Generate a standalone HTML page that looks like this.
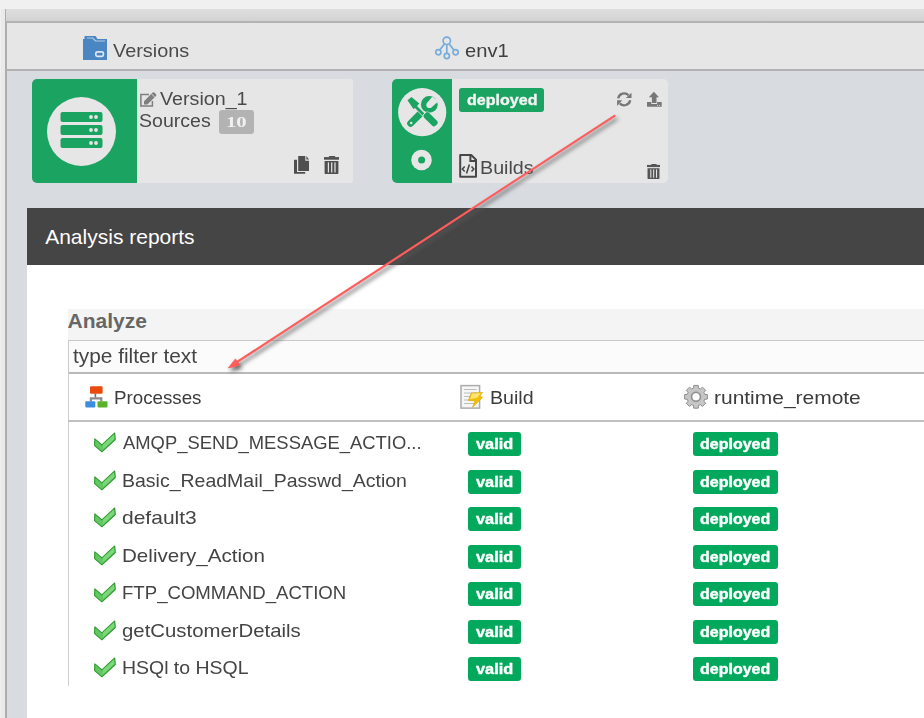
<!DOCTYPE html>
<html><head><meta charset="utf-8">
<style>
*{margin:0;padding:0;box-sizing:border-box}
html,body{width:924px;height:718px;overflow:hidden;background:#f0f0f0;font-family:"Liberation Sans",sans-serif;position:relative}
.a{position:absolute}
.t{position:absolute;white-space:nowrap;line-height:1;transform-origin:0 0}
.bg{position:absolute;height:24px;background:#02a85c;border-radius:3px}
</style></head><body>

<!-- frame -->
<div class="a" style="left:1px;top:9px;width:4px;height:709px;background:#eaeaea"></div>
<div class="a" style="left:5px;top:9px;width:2px;height:709px;background:#adadad"></div>
<div class="a" style="left:6px;top:9px;width:918px;height:12px;background:linear-gradient(#dedede,#d3d3d3)"></div>
<div class="a" style="left:6px;top:21px;width:918px;height:2px;background:#b2b2b2"></div>
<div class="a" style="left:7px;top:23px;width:917px;height:46px;background:#e6e6e6"></div>
<div class="a" style="left:6px;top:69px;width:918px;height:2px;background:#b2b2b2"></div>
<div class="a" style="left:7px;top:71px;width:917px;height:647px;background:#d8dbe0"></div>

<!-- tabs -->
<svg class="a" style="left:83px;top:36px" width="24" height="24" viewBox="0 0 24 24">
<path d="M0 3 H1.5 V0.5 Q1.5 0 2 0 H12.5 L14.5 3 H24 V24 H0 Z" fill="#4a87c2"/>
<path d="M4 2 H9.7 L12.5 5 H22" stroke="#b4cbe3" stroke-width="1.2" fill="none"/>
<rect x="12.8" y="15.8" width="7.6" height="4.6" rx="1.6" fill="#4a87c2" stroke="#dbe6f1" stroke-width="1.7"/>
</svg>
<div class="t" style="left:112.9px;top:41.94px;font-size:18.5px;font-weight:normal;font-family:'Liberation Sans';color:#4a4a4a;transform:scaleX(1.0729);">Versions</div>
<svg class="a" style="left:435px;top:36px" width="24" height="24" viewBox="0 0 24 24" fill="none" stroke="#78acdc" stroke-width="1.7">
<circle cx="11.8" cy="4.8" r="3.7"/>
<circle cx="3.3" cy="16.2" r="2.6"/>
<circle cx="11.8" cy="20" r="2.6"/>
<circle cx="20.6" cy="16.2" r="2.6"/>
<path d="M11.8 8.5 V17.4 M9.6 7.8 L5 13.6 M14 7.8 L18.6 13.6"/>
</svg>
<div class="t" style="left:464.51px;top:41.94px;font-size:18.5px;font-weight:normal;font-family:'Liberation Sans';color:#3f3f3f;transform:scaleX(1.0895);">env1</div>

<!-- card 1 -->
<div class="a" style="left:32px;top:79px;width:105px;height:104px;background:#1aa361;border-radius:5px 0 0 5px"></div>
<div class="a" style="left:137px;top:79px;width:216px;height:104px;background:#e6e6e6;border-radius:0 3px 3px 0"></div>
<div class="a" style="left:47px;top:97px;width:69px;height:69px;border-radius:50%;background:#e6e6e6"></div>
<svg class="a" style="left:60px;top:112px" width="43" height="37" viewBox="0 0 43 37">
<rect x="0.5" y="0" width="42" height="10" rx="2" fill="#1aa361"/>
<rect x="0.5" y="13" width="42" height="10" rx="2" fill="#1aa361"/>
<rect x="0.5" y="26" width="42" height="10" rx="2" fill="#1aa361"/>
<g fill="#e6e6e6"><circle cx="31" cy="5" r="1.9"/><circle cx="36" cy="5" r="1.9"/>
<circle cx="31" cy="18" r="1.9"/><circle cx="36" cy="18" r="1.9"/>
<circle cx="31" cy="31" r="1.9"/><circle cx="36" cy="31" r="1.9"/></g>
</svg>
<svg class="a" style="left:139px;top:90px" width="19" height="19" viewBox="0 0 19 19">
<path d="M10 4.6 H1.9 V16.1 H13.4 V11" fill="none" stroke="#7f7f7f" stroke-width="1.5"/>
<path d="M5 14.6 L5 11.2 L13.6 2.6 Q14.5 1.7 15.4 2.6 L17 4.2 Q17.9 5.1 17 6 L8.4 14.6 Z" fill="#7f7f7f"/>
<path d="M12.4 3.8 L15.8 7.2" stroke="#e6e6e6" stroke-width="0.9"/>
</svg>
<svg class="a" style="left:293px;top:155px" width="18" height="20" viewBox="0 0 18 20">
<path d="M1 4.8 H4 V17 H12.2 V18.7 H1 Z" fill="#4f4f4f"/>
<path d="M5.2 1 H12.3 V5.7 H16 V15.9 H5.2 Z" fill="#4f4f4f"/>
<path d="M13.4 1 L16 4.4 H13.4 Z" fill="#4f4f4f"/>
</svg>
<svg class="a" style="left:324px;top:156px" width="15" height="18" viewBox="0 0 15 18" preserveAspectRatio="none">
<path d="M4.9 1.2 V0.6 Q4.9 0 5.5 0 H10.6 Q11.2 0 11.2 0.6 V1.2 Z" fill="#4f4f4f"/>
<rect x="0" y="1.1" width="15" height="2.6" fill="#4f4f4f"/>
<path d="M0.6 5 H14.4 V17.2 Q14.4 17.9 13.7 17.9 H1.3 Q0.6 17.9 0.6 17.2 Z" fill="#4f4f4f"/>
<rect x="3.8" y="6.4" width="1.2" height="10.1" fill="#e6e6e6"/><rect x="7.1" y="6.4" width="1.2" height="10.1" fill="#e6e6e6"/><rect x="10.4" y="6.4" width="1.2" height="10.1" fill="#e6e6e6"/>
</svg>
<div class="t" style="left:160.0px;top:91.19px;font-size:17.5px;font-weight:normal;font-family:'Liberation Sans';color:#4a4a4a;transform:scaleX(1.1247);">Version_1</div>
<div class="t" style="left:139.28px;top:113.19px;font-size:17.5px;font-weight:normal;font-family:'Liberation Sans';color:#4a4a4a;transform:scaleX(1.1175);">Sources</div>
<div class="a" style="left:219px;top:110px;width:35px;height:24px;background:#b3b3b3;border-radius:3px"></div>
<div class="t" style="left:226.07px;top:114.86px;font-size:14.5px;font-weight:bold;font-family:'Liberation Serif';color:#f0f0f0;transform:scaleX(1.4308);">10</div>

<!-- card 2 -->
<div class="a" style="left:392px;top:79px;width:60px;height:104px;background:#1aa361;border-radius:5px 0 0 5px"></div>
<div class="a" style="left:452px;top:79px;width:216px;height:104px;background:#e6e6e6;border-radius:0 5px 5px 0"></div>
<svg class="a" style="left:396px;top:86px" width="54" height="54" viewBox="0 0 54 54">
<circle cx="26.2" cy="26.2" r="24.1" fill="#e6e6e6"/>
<circle cx="33.3" cy="18.4" r="8.4" fill="#1aa361"/><circle cx="33.4" cy="19" r="3.1" fill="#e6e6e6"/><path d="M31.1 16.9 L36.3 10.5 L42.5 15.3 L35.6 21.3 Z" fill="#e6e6e6"/>
<path d="M14.6 37.4 L24 28" stroke="#1aa361" stroke-width="6.8" stroke-linecap="round"/>
<circle cx="15.2" cy="36.9" r="1.25" fill="#e6e6e6"/>
<path d="M11.5 14.3 L15.5 11 L23.3 17.5 L21 20 L28.5 27.6 L26.5 29.5 L19 22 L17.4 23 Z" fill="#1aa361" stroke="#e6e6e6" stroke-width="1.2" stroke-linejoin="round" paint-order="stroke"/>
<rect x="-3.4" y="-4" width="6.8" height="16" rx="2.2" transform="translate(31.8 30.5) rotate(-45)" fill="#1aa361" stroke="#e6e6e6" stroke-width="1.2" paint-order="stroke"/>
</svg>
<svg class="a" style="left:410px;top:149px" width="23" height="23" viewBox="0 0 23 23">
<circle cx="11.5" cy="11" r="10.3" fill="#e6e6e6"/><circle cx="11.6" cy="11" r="3.5" fill="#1aa361"/>
</svg>
<div class="a" style="left:459px;top:88px;width:85px;height:24px;background:#1aa361;border-radius:3px"></div>
<div class="t" style="left:466.51px;top:93.47px;font-size:14.8px;font-weight:bold;font-family:'Liberation Sans';color:#f4f4f4;transform:scaleX(1.0857);-webkit-text-stroke:0.35px #f4f4f4">deployed</div>
<div class="t" style="left:480.37px;top:159.69px;font-size:17.5px;font-weight:normal;font-family:'Liberation Sans';color:#4a4a4a;transform:scaleX(1.1261);">Builds</div>
<svg class="a" style="left:647px;top:164px" width="13" height="15" viewBox="0 0 15 18" preserveAspectRatio="none">
<path d="M4.9 1.2 V0.6 Q4.9 0 5.5 0 H10.6 Q11.2 0 11.2 0.6 V1.2 Z" fill="#555"/>
<rect x="0" y="1.1" width="15" height="2.6" fill="#555"/>
<path d="M0.6 5 H14.4 V17.2 Q14.4 17.9 13.7 17.9 H1.3 Q0.6 17.9 0.6 17.2 Z" fill="#555"/>
<rect x="3.8" y="6.4" width="1.2" height="10.1" fill="#e6e6e6"/><rect x="7.1" y="6.4" width="1.2" height="10.1" fill="#e6e6e6"/><rect x="10.4" y="6.4" width="1.2" height="10.1" fill="#e6e6e6"/>
</svg>
<svg class="a" style="left:458px;top:153px" width="20" height="26" viewBox="0 0 20 26">
<path d="M2.2 2 H13.2 L18 6.8 V23.8 H2.2 Z" fill="none" stroke="#474747" stroke-width="2" stroke-linejoin="round"/>
<path d="M12.4 2 V8 H18" fill="none" stroke="#474747" stroke-width="2"/>
<path d="M6.7 13.5 L4.4 16 L6.7 18.5 M13.5 13.5 L15.8 16 L13.5 18.5 M11.4 11.5 L8.5 20.5" fill="none" stroke="#474747" stroke-width="1.6"/>
</svg>
<svg class="a" style="left:616px;top:91px" width="17" height="17" viewBox="0 0 17 17">
<path d="M2.2 7.4 A6.1 6.1 0 0 1 12.6 4.2" fill="none" stroke="#777" stroke-width="2.3"/>
<path d="M9.9 6.9 H15.5 V1.7 Z" fill="#777"/>
<path d="M14.2 9.2 A6.1 6.1 0 0 1 3.8 12.4" fill="none" stroke="#777" stroke-width="2.3"/>
<path d="M1.1 9.2 H6.2 L1.1 14.9 Z" fill="#777"/>
</svg>
<svg class="a" style="left:646px;top:91px" width="17" height="17" viewBox="0 0 17 17">
<path d="M7.9 0.7 L13 6.2 H10.5 V12 H5.9 V6.2 H2.8 Z" fill="#777"/>
<path d="M1 10.9 H5.3 V12.9 H11.1 V10.9 H15.7 V15.8 H1 Z" fill="#777"/>
<circle cx="11.6" cy="14.4" r="0.6" fill="#c9c9c9"/><circle cx="13.5" cy="14.4" r="0.6" fill="#c9c9c9"/>
</svg>

<!-- analysis header -->
<div class="a" style="left:27px;top:208px;width:897px;height:57px;background:#454545"></div>
<div class="t" style="left:45.2px;top:226.22px;font-size:21px;font-weight:normal;font-family:'Liberation Sans';color:#ffffff;">Analysis reports</div>
<div class="a" style="left:27px;top:265px;width:897px;height:453px;background:#fff"></div>

<div class="a" style="left:68px;top:309px;width:856px;height:31px;background:#f4f4f4"></div>
<div class="t" style="left:67.5px;top:310.22px;font-size:21px;font-weight:bold;font-family:'Liberation Sans';color:#666666;">Analyze</div>
<div class="a" style="left:68px;top:340px;width:856px;height:34px;background:#fbfbfb;border-top:1px solid #c9c9c9;border-bottom:2px solid #b9b9b9;border-left:1px solid #c9c9c9"></div>
<div class="t" style="left:72.6px;top:345.22px;font-size:21px;font-weight:normal;font-family:'Liberation Sans';color:#444444;transform:scaleX(0.9928);">type filter text</div>
<div class="a" style="left:68px;top:373px;width:1px;height:313px;background:#cfcfcf"></div>
<div class="a" style="left:68px;top:420px;width:856px;height:2px;background:#c0c0c0"></div>

<svg class="a" style="left:82px;top:382px" width="30" height="30" viewBox="0 0 30 30">
<path d="M13.4 11.6 V15.6" stroke="#6f6f6f" stroke-width="1.6"/><path d="M8.9 19.5 V16.3 H19.3 V19.5" fill="none" stroke="#8a8a8a" stroke-width="2.2"/>
<rect x="8" y="4.2" width="12.6" height="7.5" rx="1.2" fill="#ea4a0c"/>
<rect x="3.3" y="19.2" width="10" height="6.3" rx="1" fill="#3b8de0"/>
<rect x="15.5" y="19.2" width="10" height="6.3" rx="1" fill="#58b22a"/>
</svg>
<div class="t" style="left:114.19px;top:388.94px;font-size:18.5px;font-weight:normal;font-family:'Liberation Sans';color:#3c3c3c;transform:scaleX(1.0129);">Processes</div>
<svg class="a" style="left:457px;top:382px" width="30" height="30" viewBox="0 0 30 30">
<rect x="4" y="3.6" width="18.6" height="22.5" fill="#f6f6f6" stroke="#acacac" stroke-width="1.5"/>
<path d="M7 7.5 H19.5 M7 11 H19.5 M7 14.5 H19.5 M7 18 H19.5 M7 21.5 H19.5" stroke="#bdbdbd" stroke-width="1.1"/>
<path d="M14.2 10.9 L25.7 10.4 L22.6 14.2 L25.7 15.3 L15.5 25.3 L18 18.8 L11.3 18.6 Z" fill="#f1c000" stroke="#d9a600" stroke-width="0.6"/>
<path d="M15 11.6 L23.8 11.2 L20.5 15.5 L13.2 17.2 Z" fill="#fde37a"/>
</svg>
<div class="t" style="left:489.74px;top:388.94px;font-size:18.5px;font-weight:normal;font-family:'Liberation Sans';color:#3c3c3c;transform:scaleX(1.059);">Build</div>
<svg class="a" style="left:681px;top:382px" width="30" height="30" viewBox="0 0 30 30">
<g transform="translate(15 14.8)">
<path d="M-2.51 -8.64 L-2.26 -11.38 L2.26 -11.38 L2.51 -8.64 L4.34 -7.89 L6.44 -9.65 L9.65 -6.44 L7.89 -4.34 L8.64 -2.51 L11.38 -2.26 L11.38 2.26 L8.64 2.51 L7.89 4.34 L9.65 6.44 L6.44 9.65 L4.34 7.89 L2.51 8.64 L2.26 11.38 L-2.26 11.38 L-2.51 8.64 L-4.34 7.89 L-6.44 9.65 L-9.65 6.44 L-7.89 4.34 L-8.64 2.51 L-11.38 2.26 L-11.38 -2.26 L-8.64 -2.51 L-7.89 -4.34 L-9.65 -6.44 L-6.44 -9.65 L-4.34 -7.89 Z" fill="#c6c6c6" stroke="#8e8e8e" stroke-width="1" stroke-linejoin="round"/>
<circle r="4.5" fill="none" stroke="#8f8f8f" stroke-width="1.6"/>
<circle r="3.5" fill="#fff"/>
</g></svg>
<div class="t" style="left:713.87px;top:388.94px;font-size:18.5px;font-weight:normal;font-family:'Liberation Sans';color:#3c3c3c;transform:scaleX(1.1328);">runtime_remote</div>

<!-- rows -->
<svg class="a" style="left:90px;top:428px" width="30" height="30" viewBox="0 0 30 30"><path d="M4.8 10.9 L11.9 16.9 L24.7 5 L25.3 11.5 L11.9 23.8 L4.6 17.6 Z" fill="#63c863" stroke="#2f9a2f" stroke-width="1.1" stroke-linejoin="round"/><path d="M13 16.6 L23.9 6.6 L24.3 10.9 L13 21.2 Z" fill="#7ad87a"/></svg>
<div class="t" style="left:123.2px;top:433.94px;font-size:18.5px;font-weight:normal;font-family:'Liberation Sans';color:#444444;transform:scaleX(0.9946);">AMQP_SEND_MESSAGE_ACTIO...</div>
<div class="bg" style="left:468px;top:432px;width:53px"></div>
<div class="t" style="left:476.0px;top:436.73px;font-size:14.5px;font-weight:bold;font-family:'Liberation Sans';color:#ffffff;transform:scaleX(1.125);-webkit-text-stroke:0.4px #fff">valid</div>
<div class="bg" style="left:693px;top:432px;width:85px"></div>
<div class="t" style="left:700.3px;top:436.73px;font-size:14.5px;font-weight:bold;font-family:'Liberation Sans';color:#ffffff;transform:scaleX(1.1032);-webkit-text-stroke:0.4px #fff">deployed</div>
<svg class="a" style="left:90px;top:466px" width="30" height="30" viewBox="0 0 30 30"><path d="M4.8 10.9 L11.9 16.9 L24.7 5 L25.3 11.5 L11.9 23.8 L4.6 17.6 Z" fill="#63c863" stroke="#2f9a2f" stroke-width="1.1" stroke-linejoin="round"/><path d="M13 16.6 L23.9 6.6 L24.3 10.9 L13 21.2 Z" fill="#7ad87a"/></svg>
<div class="t" style="left:122.15px;top:471.94px;font-size:18.5px;font-weight:normal;font-family:'Liberation Sans';color:#444444;transform:scaleX(1.0534);">Basic_ReadMail_Passwd_Action</div>
<div class="bg" style="left:468px;top:470px;width:53px"></div>
<div class="t" style="left:476.0px;top:474.73px;font-size:14.5px;font-weight:bold;font-family:'Liberation Sans';color:#ffffff;transform:scaleX(1.125);-webkit-text-stroke:0.4px #fff">valid</div>
<div class="bg" style="left:693px;top:470px;width:85px"></div>
<div class="t" style="left:700.3px;top:474.73px;font-size:14.5px;font-weight:bold;font-family:'Liberation Sans';color:#ffffff;transform:scaleX(1.1032);-webkit-text-stroke:0.4px #fff">deployed</div>
<svg class="a" style="left:90px;top:503px" width="30" height="30" viewBox="0 0 30 30"><path d="M4.8 10.9 L11.9 16.9 L24.7 5 L25.3 11.5 L11.9 23.8 L4.6 17.6 Z" fill="#63c863" stroke="#2f9a2f" stroke-width="1.1" stroke-linejoin="round"/><path d="M13 16.6 L23.9 6.6 L24.3 10.9 L13 21.2 Z" fill="#7ad87a"/></svg>
<div class="t" style="left:122.06px;top:508.94px;font-size:18.5px;font-weight:normal;font-family:'Liberation Sans';color:#444444;transform:scaleX(1.1359);">default3</div>
<div class="bg" style="left:468px;top:507px;width:53px"></div>
<div class="t" style="left:476.0px;top:511.73px;font-size:14.5px;font-weight:bold;font-family:'Liberation Sans';color:#ffffff;transform:scaleX(1.125);-webkit-text-stroke:0.4px #fff">valid</div>
<div class="bg" style="left:693px;top:507px;width:85px"></div>
<div class="t" style="left:700.3px;top:511.73px;font-size:14.5px;font-weight:bold;font-family:'Liberation Sans';color:#ffffff;transform:scaleX(1.1032);-webkit-text-stroke:0.4px #fff">deployed</div>
<svg class="a" style="left:90px;top:541px" width="30" height="30" viewBox="0 0 30 30"><path d="M4.8 10.9 L11.9 16.9 L24.7 5 L25.3 11.5 L11.9 23.8 L4.6 17.6 Z" fill="#63c863" stroke="#2f9a2f" stroke-width="1.1" stroke-linejoin="round"/><path d="M13 16.6 L23.9 6.6 L24.3 10.9 L13 21.2 Z" fill="#7ad87a"/></svg>
<div class="t" style="left:122.09px;top:546.94px;font-size:18.5px;font-weight:normal;font-family:'Liberation Sans';color:#444444;transform:scaleX(1.1127);">Delivery_Action</div>
<div class="bg" style="left:468px;top:545px;width:53px"></div>
<div class="t" style="left:476.0px;top:549.73px;font-size:14.5px;font-weight:bold;font-family:'Liberation Sans';color:#ffffff;transform:scaleX(1.125);-webkit-text-stroke:0.4px #fff">valid</div>
<div class="bg" style="left:693px;top:545px;width:85px"></div>
<div class="t" style="left:700.3px;top:549.73px;font-size:14.5px;font-weight:bold;font-family:'Liberation Sans';color:#ffffff;transform:scaleX(1.1032);-webkit-text-stroke:0.4px #fff">deployed</div>
<svg class="a" style="left:90px;top:578px" width="30" height="30" viewBox="0 0 30 30"><path d="M4.8 10.9 L11.9 16.9 L24.7 5 L25.3 11.5 L11.9 23.8 L4.6 17.6 Z" fill="#63c863" stroke="#2f9a2f" stroke-width="1.1" stroke-linejoin="round"/><path d="M13 16.6 L23.9 6.6 L24.3 10.9 L13 21.2 Z" fill="#7ad87a"/></svg>
<div class="t" style="left:122.19px;top:583.94px;font-size:18.5px;font-weight:normal;font-family:'Liberation Sans';color:#444444;transform:scaleX(1.0054);">FTP_COMMAND_ACTION</div>
<div class="bg" style="left:468px;top:582px;width:53px"></div>
<div class="t" style="left:476.0px;top:586.73px;font-size:14.5px;font-weight:bold;font-family:'Liberation Sans';color:#ffffff;transform:scaleX(1.125);-webkit-text-stroke:0.4px #fff">valid</div>
<div class="bg" style="left:693px;top:582px;width:85px"></div>
<div class="t" style="left:700.3px;top:586.73px;font-size:14.5px;font-weight:bold;font-family:'Liberation Sans';color:#ffffff;transform:scaleX(1.1032);-webkit-text-stroke:0.4px #fff">deployed</div>
<svg class="a" style="left:90px;top:616px" width="30" height="30" viewBox="0 0 30 30"><path d="M4.8 10.9 L11.9 16.9 L24.7 5 L25.3 11.5 L11.9 23.8 L4.6 17.6 Z" fill="#63c863" stroke="#2f9a2f" stroke-width="1.1" stroke-linejoin="round"/><path d="M13 16.6 L23.9 6.6 L24.3 10.9 L13 21.2 Z" fill="#7ad87a"/></svg>
<div class="t" style="left:122.1px;top:621.94px;font-size:18.5px;font-weight:normal;font-family:'Liberation Sans';color:#444444;transform:scaleX(1.1006);">getCustomerDetails</div>
<div class="bg" style="left:468px;top:620px;width:53px"></div>
<div class="t" style="left:476.0px;top:624.73px;font-size:14.5px;font-weight:bold;font-family:'Liberation Sans';color:#ffffff;transform:scaleX(1.125);-webkit-text-stroke:0.4px #fff">valid</div>
<div class="bg" style="left:693px;top:620px;width:85px"></div>
<div class="t" style="left:700.3px;top:624.73px;font-size:14.5px;font-weight:bold;font-family:'Liberation Sans';color:#ffffff;transform:scaleX(1.1032);-webkit-text-stroke:0.4px #fff">deployed</div>
<svg class="a" style="left:90px;top:653px" width="30" height="30" viewBox="0 0 30 30"><path d="M4.8 10.9 L11.9 16.9 L24.7 5 L25.3 11.5 L11.9 23.8 L4.6 17.6 Z" fill="#63c863" stroke="#2f9a2f" stroke-width="1.1" stroke-linejoin="round"/><path d="M13 16.6 L23.9 6.6 L24.3 10.9 L13 21.2 Z" fill="#7ad87a"/></svg>
<div class="t" style="left:122.15px;top:658.94px;font-size:18.5px;font-weight:normal;font-family:'Liberation Sans';color:#444444;transform:scaleX(1.0513);">HSQl to HSQL</div>
<div class="bg" style="left:468px;top:657px;width:53px"></div>
<div class="t" style="left:476.0px;top:661.73px;font-size:14.5px;font-weight:bold;font-family:'Liberation Sans';color:#ffffff;transform:scaleX(1.125);-webkit-text-stroke:0.4px #fff">valid</div>
<div class="bg" style="left:693px;top:657px;width:85px"></div>
<div class="t" style="left:700.3px;top:661.73px;font-size:14.5px;font-weight:bold;font-family:'Liberation Sans';color:#ffffff;transform:scaleX(1.1032);-webkit-text-stroke:0.4px #fff">deployed</div>
<svg class="a" style="left:2.2px;top:3px;filter:blur(2px)" width="924" height="718" viewBox="0 0 924 718">
<path d="M614.5 115.8 L236 362.7" stroke="#5a5a5a" stroke-width="2.2" stroke-linecap="round" fill="none"/>
<path d="M228.3 367.9 L235.4 358.9 L239.7 365.3 Z" fill="#5a5a5a" stroke="#5a5a5a" stroke-width="0.8" stroke-linejoin="round"/>
</svg>
<svg class="a" style="left:0;top:0" width="924" height="718" viewBox="0 0 924 718">
<path d="M614.5 115.8 L236 362.7" stroke="#ff5c5c" stroke-width="2.2" stroke-linecap="round" fill="none"/>
<path d="M228.3 367.9 L235.4 358.9 L239.7 365.3 Z" fill="#ff5c5c" stroke="#ff5c5c" stroke-width="0.8" stroke-linejoin="round"/>
</svg>
</body></html>
